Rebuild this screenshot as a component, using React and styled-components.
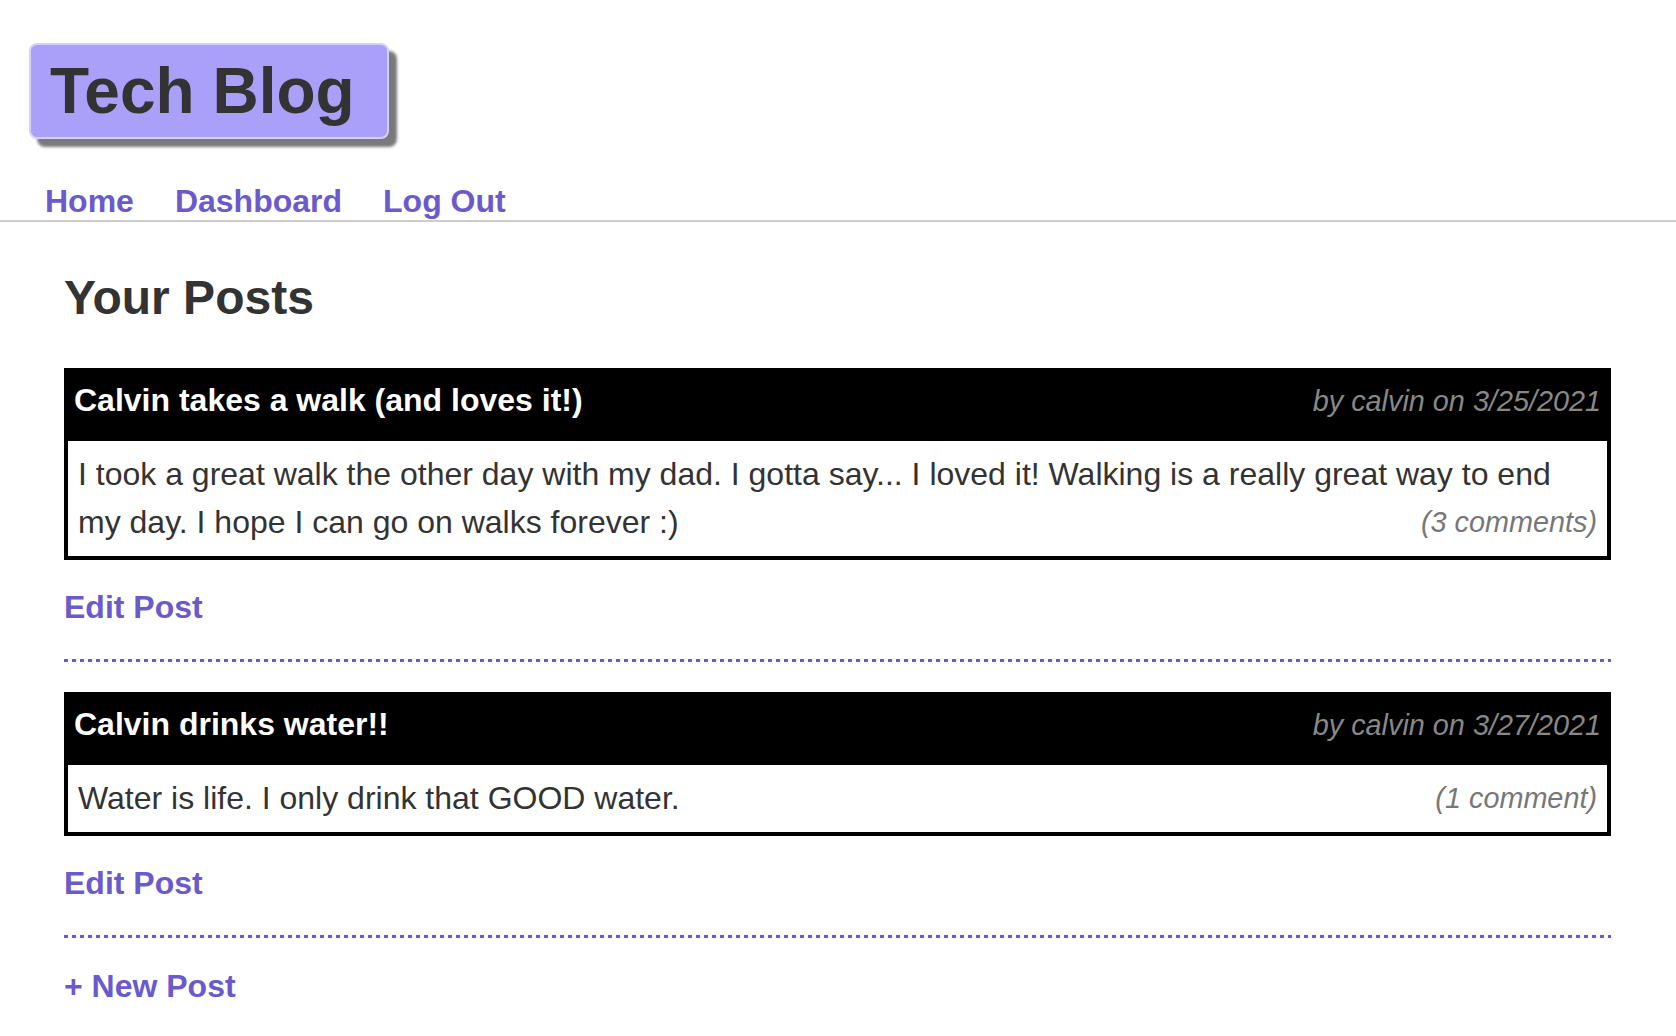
import React from "react";
import styled, { createGlobalStyle } from "styled-components";

const PURPLE = "#6a5acd";
const TEXT = "#333";

const GlobalStyle = createGlobalStyle`
  html, body {
    margin: 0;
    padding: 0;
    background: #fff;
  }
  body {
    font-family: "Liberation Sans", Arial, Helvetica, sans-serif;
    font-size: 32px;
    color: ${TEXT};
  }
`;

const Header = styled.header`
  display: flex;
  flex-direction: column;
  align-items: flex-start;
  border-bottom: 2px solid #ccc;
`;

const Logo = styled.h1`
  margin: 43px 0 0 29px;
  padding: 9px 32px 9px 19px;
  font-size: 64px;
  line-height: normal;
  font-weight: bold;
  color: ${TEXT};
  background-color: #aaa0fa;
  border: 2px solid #d4d0ff;
  border-radius: 8px;
  box-shadow: 8px 8px 3px #7a7a7a;
`;

const Nav = styled.nav`
  display: flex;
  gap: 41px;
  margin-top: 44px;
  padding-left: 45px;
`;

const NavLink = styled.a`
  font-size: 32px;
  line-height: normal;
  font-weight: bold;
  color: ${PURPLE};
  text-decoration: none;
  cursor: pointer;
`;

const Main = styled.main`
  padding: 0 65px 40px 64px;
`;

const Title = styled.h2`
  margin: 48px 0 43px;
  font-size: 48px;
  line-height: normal;
  font-weight: bold;
  color: ${TEXT};
`;

const PostItem = styled.section`
  padding-bottom: 36px;
  margin-bottom: 30px;
  background-image: linear-gradient(to right, ${PURPLE} 50%, transparent 50%);
  background-size: 8px 3px;
  background-repeat: repeat-x;
  background-position: left bottom;
`;

const Card = styled.article`
  border: 4px solid #000;
`;

const CardHeader = styled.div`
  display: flex;
  justify-content: space-between;
  align-items: baseline;
  padding: 4px 6px 16px;
  background-color: #000;
  line-height: 48px;
`;

const CardTitle = styled.span`
  font-size: 32px;
  font-weight: bold;
  color: #fff;
`;

const Meta = styled.span`
  font-size: 28.8px;
  font-style: italic;
  color: #888;
`;

const CardBody = styled.div`
  display: flow-root;
  padding: 9px 10px 10px;
  background-color: #fff;
  font-size: 32px;
  line-height: 48px;
  color: ${TEXT};
`;

const Content = styled.span``;

const Comments = styled.span`
  float: right;
  font-size: 28.8px;
  line-height: 48px;
  font-style: italic;
  color: #777;
`;

const ActionLink = styled.a`
  display: block;
  margin-top: ${(p) => (p.$first ? "0" : "29px")};
  font-size: 32px;
  line-height: normal;
  font-weight: bold;
  color: ${PURPLE};
  text-decoration: none;
  cursor: pointer;
`;

const posts = [
  {
    id: 1,
    title: "Calvin takes a walk (and loves it!)",
    author: "calvin",
    date: "3/25/2021",
    content:
      "I took a great walk the other day with my dad. I gotta say... I loved it! Walking is a really great way to end my day. I hope I can go on walks forever :)",
    comments: 3,
  },
  {
    id: 2,
    title: "Calvin drinks water!!",
    author: "calvin",
    date: "3/27/2021",
    content: "Water is life. I only drink that GOOD water.",
    comments: 1,
  },
];

const Post = ({ post }) => (
  <PostItem>
    <Card>
      <CardHeader>
        <CardTitle>{post.title}</CardTitle>
        <Meta>
          by {post.author} on {post.date}
        </Meta>
      </CardHeader>
      <CardBody>
        <Content>{post.content}</Content>
        <Comments>
          ({post.comments} {post.comments === 1 ? "comment" : "comments"})
        </Comments>
      </CardBody>
    </Card>
    <ActionLink>Edit Post</ActionLink>
  </PostItem>
);

export default function App() {
  return (
    <>
      <GlobalStyle />
      <Header>
        <Logo>Tech Blog</Logo>
        <Nav>
          <NavLink>Home</NavLink>
          <NavLink>Dashboard</NavLink>
          <NavLink>Log Out</NavLink>
        </Nav>
      </Header>
      <Main>
        <Title>Your Posts</Title>
        {posts.map((post) => (
          <Post key={post.id} post={post} />
        ))}
        <ActionLink $first>+ New Post</ActionLink>
      </Main>
    </>
  );
}
